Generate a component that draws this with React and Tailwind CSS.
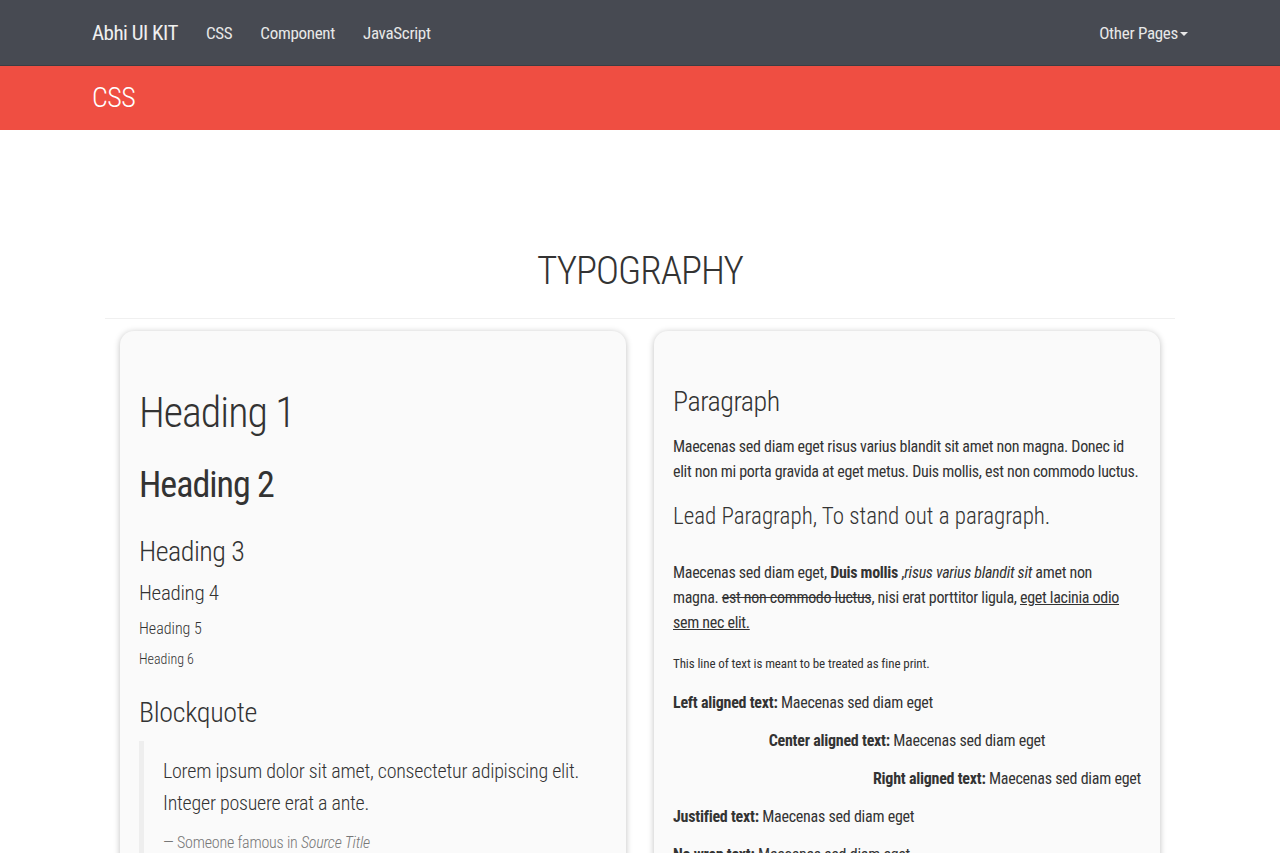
export default function App() {
  return (
    <div className="min-h-[853px] bg-white text-[#333] font-['Roboto_Condensed',sans-serif]">
      {/* Navbar */}
      <nav className="h-[66px] bg-[#474a52] border-b border-[#3b3e44] flex items-center justify-between px-[92px]">
        <div className="flex items-center gap-7">
          <span className="text-[21px] leading-[66px] text-[#f0f0f0] tracking-[-0.5px]">Abhi UI KIT</span>
          <span className="text-[17px] leading-[66px] text-[#e8e8e8] tracking-[-0.3px]">CSS</span>
          <span className="text-[17px] leading-[66px] text-[#e8e8e8] tracking-[-0.3px]">Component</span>
          <span className="text-[17px] leading-[66px] text-[#e8e8e8] tracking-[-0.3px]">JavaScript</span>
        </div>
        <div className="flex items-center text-[17px] leading-[66px] text-[#e8e8e8] tracking-[-0.3px]">
          <span>Other Pages</span>
          <span className="ml-[2px] mt-[2px] w-0 h-0 border-l-[4px] border-r-[4px] border-t-[4px] border-l-transparent border-r-transparent border-t-[#e8e8e8]" />
        </div>
      </nav>

      {/* Red banner */}
      <div className="h-[64px] bg-[#ef4e42] flex items-center px-[92px]">
        <span className="text-[28px] leading-[64px] text-white font-light tracking-[-0.5px]">CSS</span>
      </div>

      {/* Title */}
      <h1 className="mt-[117px] text-center text-[39px] leading-[48px] font-light text-[#333] tracking-[-1px]">TYPOGRAPHY</h1>
      <div className="mt-[23px] mx-auto w-[1070px] h-px bg-[#f0f0f0]" />

      {/* Cards */}
      <div className="mt-[12px] mx-auto w-[1040px] grid grid-cols-2 gap-[28px]">
        {/* Left card */}
        <div className="h-[560px] bg-[#fafafa] rounded-[14px] shadow-[0_1px_6px_rgba(0,0,0,0.25)] px-[19px] pt-[59px]">
          <div className="text-[42px] leading-[46px] font-light tracking-[-1px]">Heading 1</div>
          <div className="mt-[29px] text-[36px] leading-[40px] font-normal tracking-[-1px]">Heading 2</div>
          <div className="mt-[31px] text-[28px] leading-[32px] font-light tracking-[-0.5px]">Heading 3</div>
          <div className="mt-[12px] text-[21px] leading-[26px] font-light tracking-[-0.3px]">Heading 4</div>
          <div className="mt-[13px] text-[16px] leading-[20px] font-light">Heading 5</div>
          <div className="mt-[11px] text-[14px] leading-[18px] font-light">Heading 6</div>
          <div className="mt-[29px] text-[28px] leading-[32px] font-light tracking-[-0.3px]">Blockquote</div>
          <div className="mt-[12px] border-l-[5px] border-[#eeeeee] pl-[19px] pt-[14px]">
            <p className="text-[20px] leading-[32px] font-light tracking-[-0.25px]">
              Lorem ipsum dolor sit amet, consectetur adipiscing elit.
              <br />
              Integer posuere erat a ante.
            </p>
            <p className="mt-[14px] text-[16px] leading-[20px] text-[#777] font-light tracking-[-0.2px]">
              — Someone famous in <cite className="italic">Source Title</cite>
            </p>
          </div>
        </div>

        {/* Right card */}
        <div className="h-[560px] bg-[#fafafa] rounded-[14px] shadow-[0_1px_6px_rgba(0,0,0,0.25)] px-[19px] pt-[55px]">
          <div className="text-[28px] leading-[32px] font-light tracking-[-0.5px]">Paragraph</div>
          <p className="mt-[16px] text-[16px] leading-[25px] whitespace-nowrap tracking-[-0.3px]">
            Maecenas sed diam eget risus varius blandit sit amet non magna. Donec id
            <br />
            elit non mi porta gravida at eget metus. Duis mollis, est non commodo luctus.
          </p>
          <div className="mt-[18px] text-[23px] leading-[30px] font-light whitespace-nowrap">
            Lead Paragraph, To stand out a paragraph.
          </div>
          <p className="mt-[28px] text-[16px] leading-[25px] whitespace-nowrap tracking-[-0.3px]">
            Maecenas sed diam eget, <b className="font-bold">Duis mollis</b> ,<i>risus varius blandit sit</i> amet non
            <br />
            magna. <s>est non commodo luctus</s>, nisi erat porttitor ligula, <u>eget lacinia odio</u>
            <br />
            <u>sem nec elit.</u>
          </p>
          <p className="mt-[21px] text-[13px] leading-[16px] tracking-[-0.1px]">This line of text is meant to be treated as fine print.</p>
          <p className="mt-[12px] text-[16px] leading-[38px] text-left tracking-[-0.25px]">
            <b className="font-bold">Left aligned text:</b> Maecenas sed diam eget
          </p>
          <p className="text-[16px] leading-[38px] text-center tracking-[-0.25px]">
            <b className="font-bold">Center aligned text:</b> Maecenas sed diam eget
          </p>
          <p className="text-[16px] leading-[38px] text-right tracking-[-0.25px]">
            <b className="font-bold">Right aligned text:</b> Maecenas sed diam eget
          </p>
          <p className="text-[16px] leading-[38px] text-justify tracking-[-0.25px]">
            <b className="font-bold">Justified text:</b> Maecenas sed diam eget
          </p>
          <p className="text-[16px] leading-[38px] whitespace-nowrap tracking-[-0.25px]">
            <b className="font-bold">No wrap text:</b> Maecenas sed diam eget
          </p>
        </div>
      </div>
    </div>
  );
}
